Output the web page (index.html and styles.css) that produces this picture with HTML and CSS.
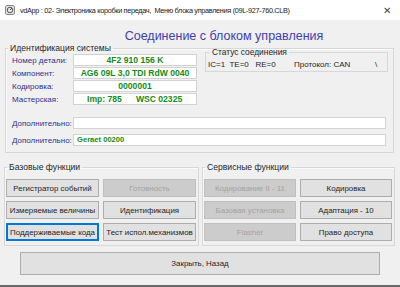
FILE: index.html
```html
<!DOCTYPE html>
<html lang="ru">
<head>
<meta charset="utf-8">
<title>vdApp</title>
<link rel="stylesheet" href="styles.css">
</head>
<body>
<div class="window">
  <div class="titlebar">
    <svg class="appicon" width="10" height="10" viewBox="0 0 10 10">
      <rect x="0.5" y="0.5" width="9" height="9" rx="1.5" fill="#e4e4e4" stroke="#8a8a8a"/>
      <circle cx="5" cy="5" r="2.8" fill="none" stroke="#555" stroke-width="1"/>
      <path d="M5 5 L7 3" stroke="#555" stroke-width="1"/>
    </svg>
    <span class="title">vdApp : 02- Электроника коробки передач,&nbsp; Меню блока управления (09L-927-760.CLB)</span>
    <span class="close">✕</span>
  </div>
  <div class="content">
    <div class="heading">Соединение с блоком управления</div>
    <fieldset class="group ident">
      <legend>Идентификация системы</legend>
      <div class="ident-top">
        <div class="rows">
          <div class="row"><span class="label">Номер детали:</span><span class="field">4F2 910 156 K</span></div>
          <div class="row"><span class="label">Компонент:</span><span class="field">AG6 09L 3,0 TDI RdW 0040</span></div>
          <div class="row"><span class="label">Кодировка:</span><span class="field">0000001</span></div>
          <div class="row"><span class="label">Мастерская:</span><span class="field spaced"><span>Imp: 785</span><span>WSC 02325</span></span></div>
        </div>
        <fieldset class="status">
          <legend>Статус соединения</legend>
          <div class="status-line"><span class="st1">IC=1&nbsp; TE=0&nbsp;&nbsp; RE=0</span><span class="st2">Протокол: CAN</span><span class="st3">\</span></div>
        </fieldset>
      </div>
      <div class="extra">
        <div class="row"><span class="label">Дополнительно:</span><span class="field wide"></span></div>
        <div class="row"><span class="label">Дополнительно:</span><span class="field wide left">Geraet 00200</span></div>
      </div>
    </fieldset>
    <div class="funcs">
      <fieldset class="group fgroup basic">
        <legend>Базовые функции</legend>
        <div class="btngrid">
          <button class="btn">Регистратор событий</button>
          <button class="btn" disabled>Готовность</button>
          <button class="btn">Измеряемые величины</button>
          <button class="btn">Идентификация</button>
          <button class="btn focus">Поддерживаемые кода</button>
          <button class="btn">Тест испол.механизмов</button>
        </div>
      </fieldset>
      <fieldset class="group fgroup service">
        <legend>Сервисные функции</legend>
        <div class="btngrid">
          <button class="btn" disabled>Кодирование II - 11</button>
          <button class="btn">Кодировка</button>
          <button class="btn" disabled>Базовая установка</button>
          <button class="btn">Адаптация - 10</button>
          <button class="btn" disabled>Flasher</button>
          <button class="btn">Право доступа</button>
        </div>
      </fieldset>
    </div>
    <div class="closerow"><button class="btn closebtn">Закрыть, Назад</button></div>
  </div>
  <div class="bottomline"></div>
</div>
</body>
</html>
```
FILE: styles.css
```css
* { box-sizing: border-box; }
html, body { margin: 0; padding: 0; }
body {
  width: 400px;
  height: 287px;
  overflow: hidden;
  background: #f0f0f0;
  font-family: "Liberation Sans", Arial, sans-serif;
  font-size: 8px;
  color: #1e1e1e;
}
.window { display: flex; flex-direction: column; height: 287px; }
.titlebar {
  height: 20px;
  background: #ffffff;
  display: flex;
  align-items: center;
  padding-left: 5px;
  font-size: 7.3px;
  letter-spacing: -0.32px;
  color: #222;
}
.appicon { flex: none; margin-right: 5px; }
.title { flex: 1; white-space: nowrap; }
.close { width: 24px; font-size: 10px; color: #444; text-align: center; margin-right: 1px; letter-spacing: 0; }
.content { flex: 1; display: flex; flex-direction: column; }
.heading {
  padding-top: 10px;
  height: 22px;
  line-height: 12px;
  font-size: 12.5px;
  color: #4040a8;
  text-align: center;
  padding-left: 48px;
}
.group {
  margin: 0;
  border: 1px solid #d7d7d7;
  box-shadow: inset 1px 1px 0 #fbfbfb;
  min-width: 0;
}
.group > legend {
  font-size: 8.6px;
  line-height: 12px;
  padding: 0 2px;
  color: #1e1e1e;
}
.ident {
  margin: 0 6px 0 5px;
  padding: 0 5px 6px 6px;
}
.ident > legend { margin-left: -4px; }
.ident-top { display: flex; gap: 8px; }
.rows { display: flex; flex-direction: column; gap: 1px; width: 185px; }
.row { display: flex; align-items: center; height: 12px; }
.label { width: 61px; flex: none; color: #30308a; white-space: nowrap; }
.field {
  width: 124px;
  height: 12px;
  background: #ffffff;
  border: 1px solid #d2d2d2;
  color: #178a17;
  font-weight: bold;
  font-size: 8.6px;
  text-align: center;
  line-height: 10px;
  white-space: nowrap;
  overflow: hidden;
}
.spaced { display: flex; gap: 14px; padding-left: 13px; }
.status {
  flex: 1;
  margin: -7px 0 0 0;
  padding: 0 2px 2px 2px;
  border: 1px solid #d7d7d7;
  height: 25px;
}
.status > legend {
  font-size: 8.4px;
  line-height: 10px;
  padding: 0 2px;
  margin-left: 2px;
  color: #1e1e1e;
}
.status-line { display: flex; line-height: 12px; white-space: nowrap; margin-top: 2px; font-size: 8px; }
.st1 { width: 86px; }
.st2 { width: 81px; }
.st3 { width: 10px; }
.extra { display: flex; flex-direction: column; gap: 5px; margin-top: 12px; }
.field.wide { width: auto; flex: 1; margin-right: 2px; }
.field.left { text-align: left; padding-left: 3px; font-size: 7.6px; }
.funcs { display: flex; margin-top: 8px; margin-left: 4px; gap: 3px; }
.fgroup { padding: 0 2px 4px 1px; }
.fgroup > legend { margin-left: 1px; }
.basic { width: 195px; }
.service { width: 193px; }
.btngrid {
  display: grid;
  grid-template-columns: 1fr 1fr;
  gap: 4px;
  margin-top: 6px;
}
.btn {
  height: 18px;
  padding: 0;
  margin: 0;
  font-family: "Liberation Sans", Arial, sans-serif;
  font-size: 7.9px;
  color: #1e1e1e;
  background: #e1e1e1;
  border: 1px solid #adadad;
  white-space: nowrap;
  overflow: hidden;
}
.btn:disabled { background: #cccccc; border-color: #bfbfbf; color: #a3a3a3; }
.btn.focus { border: 2px solid #0078d7; }
.closerow { display: flex; justify-content: center; margin-top: 6px; }
.closebtn { width: 360px; height: 23px; }
.bottomline { height: 2px; background: #6a6a6a; }
```
